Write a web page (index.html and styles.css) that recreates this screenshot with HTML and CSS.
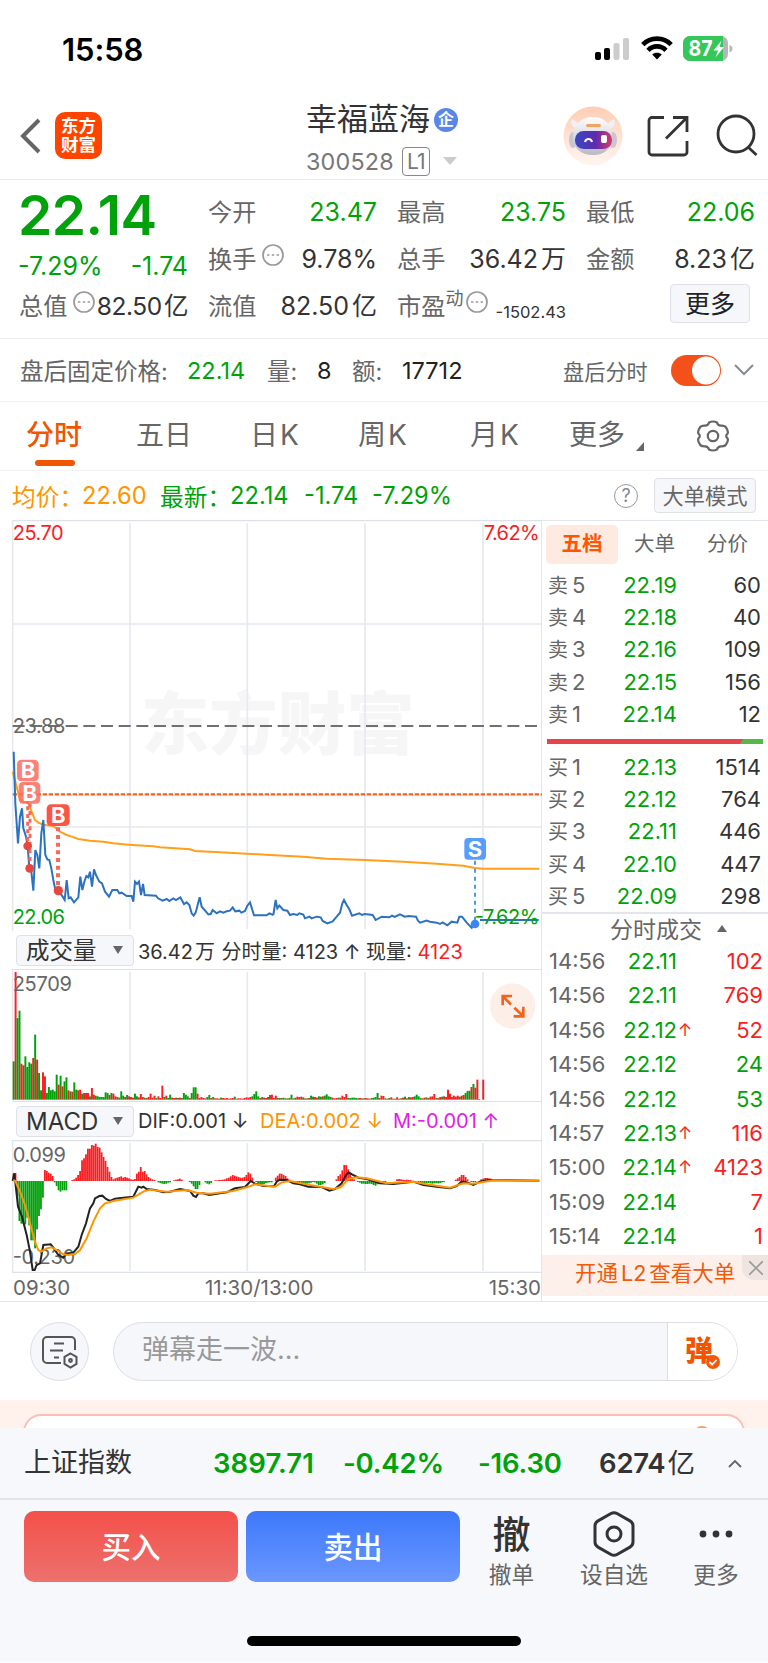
FILE: index.html
```html
<!DOCTYPE html>
<html lang="zh-CN">
<head>
  <meta charset="UTF-8">
  <meta name="viewport" content="width=device-width, initial-scale=1.0">
  <title>幸福蓝海 300528</title>
  <link rel="stylesheet" href="styles.css">
</head>
<body>

<div class="statusbar">
  <span class="time">15:58</span>
  <svg class="signal" width="35" height="24" viewBox="0 0 35 24">
    <rect x="0" y="14" width="6" height="8" rx="2"/>
    <rect x="9" y="10" width="6" height="12" rx="2"/>
    <rect x="18.500" y="5" width="6" height="17" rx="2" fill="#ccc"/>
    <rect x="28" y="0" width="6" height="22" rx="2" fill="#ccc"/>
  </svg>
  <svg class="wifi" width="32" height="24" viewBox="0 0 32 24">
    <g fill="none" stroke="#000" stroke-width="4.600">
      <path d="M1.800 8.600C9.500 .6 22.500 .6 30.200 8.600"/>
      <path d="M7 14.300c5-5.200 13-5.200 18 0"/>
    </g>
    <path d="M16 23.500l-4.800-5c2.600-2.300 7-2.300 9.600 0z"/>
  </svg>
  <svg class="battery" width="50" height="26" viewBox="0 0 50 26">
    <rect width="45" height="25" rx="7" fill="#b4b6ba"/>
    <path d="M7 0h33v25H7a7 7 0 0 1-7-7V7a7 7 0 0 1 7-7z" fill="#34c759"/>
    <path d="M46.500 9c4 1.500 4 6 0 7.500z" fill="#b4b6ba"/>
    <text x="5.500" y="20" class="battery-num" textLength="24" lengthAdjust="spacingAndGlyphs">87</text>
    <path d="M38.500 4.500l-8 10h4.500l-2.500 7 8.500-10.500h-4.500z" fill="#fff"/>
  </svg>
</div>

<header class="header">
  <svg class="back" width="22" height="36" viewBox="0 0 22 36"><path d="M19 2L3 18l16 16" fill="none" stroke="#666" stroke-width="4"/></svg>
  <div class="logo"><span>东方</span><span>财富</span></div>
  <div class="title">
    <div class="name"><span>幸福蓝海</span><i>企</i></div>
    <div class="code">300528<b>L1</b><svg width="14" height="8"><path d="M0 0h14l-7 8z" fill="#ccc"/></svg></div>
  </div>
  <svg class="robot" width="60" height="60" viewBox="0 0 60 60">
    <defs>
      <linearGradient id="halo" x2="0" y2="1"><stop stop-color="#ffcdb4"/><stop offset="1" stop-color="#fff6f1"/></linearGradient>
      <linearGradient id="visor"><stop stop-color="#3a48c4"/><stop offset=".55" stop-color="#5b2bb0"/><stop offset="1" stop-color="#d93a6a"/></linearGradient>
      <linearGradient id="shell" x2="0" y2="1"><stop stop-color="#fff"/><stop offset="1" stop-color="#b9b8c4"/></linearGradient>
    </defs>
    <circle cx="30" cy="30" r="29.500" fill="url(#halo)"/>
    <path d="M12 22c-4-2-5-5-3-9 3 1 6 4 8 7zM48 22c4-2 5-5 3-9-3 1-6 4-8 7z" fill="#f1eff3"/>
    <ellipse cx="10" cy="34" rx="4" ry="8" fill="#c9c6d4"/><ellipse cx="50" cy="34" rx="4" ry="8" fill="#c9c6d4"/>
    <path d="M30 11c11 0 19 7 19 20 0 12-8 18-19 18s-20-6-20-18c0-13 9-20 20-20z" fill="url(#shell)"/>
    <rect x="12" y="25" width="37" height="18" rx="8.500" fill="url(#visor)"/>
    <path d="M22 36c1-4 6-4 7 0" fill="none" stroke="#fff" stroke-width="2"/>
    <rect x="38" y="29" width="6" height="8" rx="2" fill="#fff"/>
    <rect x="23" y="18" width="15" height="3" rx="1.500" fill="#f4a261"/>
  </svg>
  <svg class="share" width="42" height="42" viewBox="0 0 42 42" fill="none" stroke="#333" stroke-width="2.800">
    <path d="M17 2.500H5a3 3 0 0 0-3 3V37a3 3 0 0 0 3 3h32a3 3 0 0 0 3-3V26M26 2.500h14V17M39.500 3L19 23.500"/>
  </svg>
  <svg class="search" width="44" height="44" viewBox="0 0 44 44" fill="none" stroke="#333" stroke-width="2.800">
    <circle cx="20" cy="20" r="18"/><path d="M32 33l8.500 8"/>
  </svg>
</header>

<section class="quote">
  <div class="price">22.14</div>
  <div class="change"><span>-7.29%</span><span>-1.74</span></div>
  <div class="cell cap"><label>总值</label><svg class="dots" viewBox="0 0 22 22"><circle cx="11" cy="11" r="10"/><path d="M5 11h2.400m2.400 0h2.400m2.400 0h2.400"/></svg><em>82.50<u>亿</u></em></div>
  <div class="cell c2 r1"><label>今开</label><em class="green">23.47</em></div>
  <div class="cell c3 r1"><label>最高</label><em class="green">23.75</em></div>
  <div class="cell c4 r1"><label>最低</label><em class="green">22.06</em></div>
  <div class="cell c2 r2"><label>换手</label><svg class="dots gap" viewBox="0 0 22 22"><circle cx="11" cy="11" r="10"/><path d="M5 11h2.400m2.400 0h2.400m2.400 0h2.400"/></svg><em>9.78%</em></div>
  <div class="cell c3 r2"><label>总手</label><em>36.42<u>万</u></em></div>
  <div class="cell c4 r2"><label>金额</label><em>8.23<u>亿</u></em></div>
  <div class="cell c2 r3"><label>流值</label><em>82.50<u>亿</u></em></div>
  <div class="cell c3 r3"><label>市盈</label><sup>动</sup><svg class="dots" viewBox="0 0 22 22"><circle cx="11" cy="11" r="10"/><path d="M5 11h2.400m2.400 0h2.400m2.400 0h2.400"/></svg><em class="small">-1502.43</em></div>
  <button class="more">更多</button>
</section>

<section class="after">
  <span class="w1">盘后固定价格:</span><b class="w2 green">22.14</b><span class="w3">量:</span><b class="w4">8</b><span class="w5">额:</span><b class="w6">17712</b>
  <span class="w7">盘后分时</span>
  <div class="toggle"></div>
  <svg width="20" height="12" viewBox="0 0 20 12"><path d="M1 1l9 9 9-9" fill="none" stroke="#888c94" stroke-width="2"/></svg>
</section>

<nav class="tabs">
  <span class="on">分时</span><span>五日</span><span>日<u>K</u></span><span>周<u>K</u></span><span>月<u>K</u></span><span>更多</span>
  <svg class="corner" width="8" height="9"><path d="M8 0v9H0z" fill="#666"/></svg>
  <svg class="gear" width="34" height="32" viewBox="0 0 34 32" fill="none" stroke="#666" stroke-width="2.200">
    <path d="M13 2.500q4-2 8 0q.8 3 3.800 3.200q4.400-.2 5.200 1.800q2.600 3.400 1.600 6q-2.800 2.500 0 5q1 2.600-1.600 6q-.8 2-5.200 1.800q-3 .2-3.800 3.200q-4 2-8 0q-.8-3-3.800-3.200q-4.400.2-5.200-1.800q-2.600-3.400-1.600-6q2.800-2.500 0-5q-1-2.600 1.600-6q.8-2 5.200-1.800q3-.2 3.800-3.200z"/>
    <circle cx="17" cy="16" r="5.200"/>
  </svg>
</nav>

<section class="avg">
  <span class="orange a1">均价：</span><span class="orange a2">22.60</span>
  <span class="green a3">最新：</span><span class="green a4">22.14</span><span class="green a5">-1.74</span><span class="green a6">-7.29%</span>
  <i class="help">?</i>
  <button class="mode">大单模式</button>
</section>

<main class="market">
  <div class="charts">
    <svg class="pane" width="542" height="411" viewBox="0 -660 1626 1233">
      <text class="watermark" x="422" y="28" textLength="822" lengthAdjust="spacingAndGlyphs">东方财富</text>
      <g class="grid">
        <path d="M38-660V573M390-650V567M742-650V567M1095-650V567M1449-650V567M38-348H1624M38 261H1624"/>
      </g>
      <path class="frame" d="M38-658H1626"/>
      <path d="M38-42H1620" stroke="#707070" stroke-width="6" stroke-dasharray="36 17"/>
      <path d="M38 163H1626" stroke="#f2641e" stroke-width="7" stroke-dasharray="13 5"/>
      <g class="avgline">
        <polyline points="38,95 50,140 60,180 85,190 95,215 105,240 115,248 130,254 160,258 180,275 200,285 215,290 235,297 270,302 310,305 340,310 385,314 460,319 480,322 570,328 585,333 660,337 740,341 810,345 910,350 980,356 1094,360 1210,365 1310,371 1390,377 1425,384 1450,386 1618,386"/>
      </g>
      <g class="priceline">
        <polyline points="41,35 46,190 54,310 60,230 66,205 70,265 78,290 83,318 88,385 94,395 100,452 106,330 112,345 118,385 124,280 130,240 136,345 142,358 148,360 154,385 160,420 166,450 175,452 188,470 194,480 200,420 206,475 212,472 222,487 235,472 241,410 247,450 253,425 259,408 265,412 270,395 276,440 282,388 288,405 298,425 306,430 315,455 327,470 337,450 352,450 358,460 365,458 380,468 395,468 400,485 405,425 411,432 417,425 423,465 429,432 434,465 468,467 474,475 488,482 500,477 508,483 520,475 528,480 541,472 547,483 552,492 560,487 568,495 575,520 581,527 587,518 599,472 605,500 618,515 625,523 632,522 638,510 650,520 660,514 670,518 680,514 690,512 698,502 706,514 718,512 724,518 735,513 742,497 750,487 762,526 800,526 808,520 820,525"/>
        <polyline transform="translate(810 0)" points="10,525 17,480 22,505 28,497 40,510 52,512 60,525 70,522 82,525 88,520 100,524 105,535 118,530 125,535 140,530 152,532 158,543 172,550 188,544 200,530 210,518 217,490 222,480 230,495 238,508 246,527 268,520 276,525 284,522 308,525 317,540 335,530 358,532 366,527 374,531 390,523 404,530 416,528 438,530 444,542 450,548 470,542 480,545 500,548 510,552 518,547 532,556 545,545 562,548 568,530 576,530 590,548 605,563 610,550 615,552"/>
        <path d="M1440 540H1616"/>
      </g>
      <g class="buys">
        <path d="M83 130V318M90 190V385"/>
        <path d="M174 262V450" class="thick"/>
        <circle cx="83" cy="318" r="13"/><circle cx="89" cy="385" r="13"/><circle cx="175" cy="452" r="14"/>
        <rect x="51" y="59" width="65" height="65" rx="13"/><rect x="56" y="126" width="65" height="65" rx="13"/><rect x="140" y="193" width="69" height="65" rx="13" class="strong"/>
        <text x="84" y="114">B</text><text x="89" y="182">B</text><text x="175" y="249">B</text>
      </g>
      <g class="sell">
        <path d="M1425 362V545" stroke-dasharray="12 12"/>
        <circle cx="1425" cy="552" r="13"/>
        <rect x="1393" y="294" width="65" height="65" rx="12"/>
        <text x="1425" y="350">S</text>
      </g>
      <text x="38" y="-600" class="red" textLength="153">25.70</text>
      <text x="1619" y="-600" class="red end" textLength="168">7.62%</text>
      <text x="38" y="-22" class="gray" textLength="158">23.88</text>
      <text x="38" y="551" class="green" textLength="157">22.06</text>
      <text x="1618" y="551" class="green end" textLength="194">-7.62%</text>
    </svg>

    <div class="bar">
      <div class="select cn"><span>成交量</span><svg width="10" height="8"><path d="M0 0h10l-5 8z" fill="#666"/></svg></div>
      <span class="vol">36.42<u>万</u> 分时量: 4123 ↑ 现量: <em class="red">4123</em></span>
    </div>

    <svg class="pane" width="542" height="133" viewBox="0 132 1626 399">
      <path class="frame" d="M38 133H1626M38 530H1626"/>
      <g class="grid"><path d="M38 132V531M390 141V523M742 141V523M1095 141V523M1449 141V523"/></g>
      <g id="volume"></g>
      <text x="38" y="198" class="gray" textLength="178">25709</text>
      <circle cx="1538" cy="243" r="68" fill="#fdefe8"/>
      <path d="M1508 241v-28h28M1508 213l25 26M1570 245v29h-29M1570 274l-27-26" class="expand"/>
    </svg>

    <div class="bar">
      <div class="select"><span>MACD</span><svg width="10" height="8"><path d="M0 0h10l-5 8z" fill="#666"/></svg></div>
      <span class="m1">DIF:0.001 ↓</span><span class="m2">DEA:0.002 ↓</span><span class="m3">M:-0.001 ↑</span>
    </div>

    <svg class="pane" width="542" height="133" viewBox="0 645 1626 399">
      <path class="frame" d="M38 647H1626M38 1042H1626"/>
      <g class="grid"><path d="M38 645V1044M390 654V1038M742 654V1038M1095 654V1038M1449 654V1038"/></g>
      <g id="macd"></g>
      <text x="38" y="711" class="gray" textLength="160">0.099</text>
      <text x="38" y="1018" class="gray" textLength="187">-0.230</text>
      <polyline class="dif" points="38,768 43,745 48,790 54,845 66,875 80,930 90,980 98,1035 104,1035 110,1020 120,1015 130,960 152,958 160,968 175,990 190,998 200,985 220,983 235,965 245,930 258,895 270,850 280,835 285,820 298,813 307,812 318,822 330,828 345,821 370,818 400,815 410,795 415,785 425,788 430,785 440,792 465,795 490,802 510,800 540,792 570,798 580,812 588,816 595,805 610,805 628,810 660,805 680,802 705,790 735,786 752,768 765,776 790,783 822,784 830,770 840,764 860,765 880,775 900,778 925,785 965,786 988,797 1005,792 1025,775 1038,750 1046,742 1056,748 1075,758 1100,762 1140,775 1180,777 1240,770 1270,780 1310,785 1350,790 1370,783 1385,770 1400,772 1420,780 1440,770 1470,765 1618,767"/>
      <polyline class="dea" points="40,765 46,768 60,800 75,840 90,895 105,950 115,975 124,980 140,970 155,967 170,975 190,988 205,990 225,987 240,975 260,940 280,890 300,850 315,835 340,828 400,818 430,800 450,794 500,800 560,795 590,803 630,806 700,798 740,787 765,778 800,782 825,785 845,772 870,768 930,780 1000,792 1022,787 1045,762 1070,757 1100,760 1160,775 1240,770 1280,778 1350,788 1390,775 1420,776 1480,766 1618,767"/>
    </svg>

    <div class="axis"><span>09:30</span><span>11:30/13:00</span><span>15:30</span></div>
  </div>

  <aside class="book">
    <div class="book-tabs"><b>五档</b><span>大单</span><span>分价</span></div>
    <div class="levels">
      <p><i>卖<u>5</u></i><em>22.19</em><b>60</b></p>
      <p><i>卖<u>4</u></i><em>22.18</em><b>40</b></p>
      <p><i>卖<u>3</u></i><em>22.16</em><b>109</b></p>
      <p><i>卖<u>2</u></i><em>22.15</em><b>156</b></p>
      <p><i>卖<u>1</u></i><em>22.14</em><b>12</b></p>
    </div>
    <div class="ratio"></div>
    <div class="levels">
      <p><i>买<u>1</u></i><em>22.13</em><b>1514</b></p>
      <p><i>买<u>2</u></i><em>22.12</em><b>764</b></p>
      <p><i>买<u>3</u></i><em>22.11</em><b>446</b></p>
      <p><i>买<u>4</u></i><em>22.10</em><b>447</b></p>
      <p><i>买<u>5</u></i><em>22.09</em><b>298</b></p>
    </div>
    <div class="deal-title"><span>分时成交</span><svg width="10" height="7"><path d="M0 7h10L5 0z" fill="#666"/></svg></div>
    <div class="deals">
      <p><i>14:56</i><em>22.11</em><s></s><b class="red">102</b></p>
      <p><i>14:56</i><em>22.11</em><s></s><b class="red">769</b></p>
      <p><i>14:56</i><em>22.12</em><s>↑</s><b class="red">52</b></p>
      <p><i>14:56</i><em>22.12</em><s></s><b class="green">24</b></p>
      <p><i>14:56</i><em>22.12</em><s></s><b class="green">53</b></p>
      <p><i>14:57</i><em>22.13</em><s>↑</s><b class="red">116</b></p>
      <p><i>15:00</i><em>22.14</em><s>↑</s><b class="red">4123</b></p>
      <p><i>15:09</i><em>22.14</em><s></s><b class="red">7</b></p>
      <p><i>15:14</i><em>22.14</em><s></s><b class="red">1</b></p>
    </div>
    <div class="promo"><span>开通<u>L2</u>查看大单</span><div class="close"><svg width="14" height="14"><path d="M0 0l14 14M14 0L0 14" stroke="#999" stroke-width="1.600"/></svg></div></div>
  </aside>
</main>

<section class="danmu">
  <div class="note">
    <svg width="38" height="34" viewBox="0 0 38 34" fill="none" stroke="#555" stroke-width="2">
      <path d="M34 15V6a4 4 0 0 0-4-4H6a4 4 0 0 0-4 4v18a4 4 0 0 0 4 4h14M13 8.500h10M9 15.500h13M13 22.500h5"/>
      <path d="M29.500 18.500l6 3.400v7l-6 3.600-6-3.600v-7z"/><circle cx="29.500" cy="25.500" r="1.400"/>
    </svg>
  </div>
  <div class="input"><span>弹幕走一波...</span>
    <div class="send">弹<svg width="14" height="14" viewBox="0 0 14 14"><circle cx="7" cy="7" r="7" fill="#f05a0a"/><path d="M3.500 7l2.600 2.600L10.500 5" fill="none" stroke="#fff" stroke-width="1.800"/></svg></div>
  </div>
</section>

<section class="feed"><div class="card"><i></i></div></section>

<section class="index">
  <span class="i1">上证指数</span><b class="i2">3897.71</b><b class="i3">-0.42%</b><b class="i4">-16.30</b><strong>6274<span>亿</span></strong>
  <svg width="14" height="9" viewBox="0 0 14 9"><path d="M1 8l6-6 6 6" fill="none" stroke="#666" stroke-width="1.800"/></svg>
</section>

<footer class="footer">
  <button class="buy">买入</button>
  <button class="sellbtn">卖出</button>
  <div class="act a-cancel"><div class="pic glyph">撤</div>撤单</div>
  <div class="act a-add"><div class="pic"><svg width="42" height="46" viewBox="0 0 42 46" fill="none" stroke="#333" stroke-width="3"><path d="M18 2.500q3-1.700 6 0l13 7.400q3 1.700 3 5v16.200q0 3.300-3 5l-13 7.400q-3 1.700-6 0l-13-7.400q-3-1.700-3-5V14.900q0-3.300 3-5z"/><circle cx="21" cy="23" r="7"/></svg></div>设自选</div>
  <div class="act a-more"><div class="pic"><svg width="34" height="8" fill="#333"><circle cx="4" cy="4" r="3.400"/><circle cx="17" cy="4" r="3.400"/><circle cx="30" cy="4" r="3.400"/></svg></div>更多</div>
  <div class="home"></div>
</footer>

<script src="script.js"></script>
</body>
</html>
```
FILE: styles.css
```css
body {
  margin: 0;
  width: 768px;
  height: 1663px;
  overflow: hidden;
  background: #fff;
  color: #333;
  font-family: Inter, "Noto Sans CJK SC", sans-serif;
}

* {
  box-sizing: border-box;
}

i, em, s, u {
  font-style: normal;
  text-decoration: none;
}

svg {
  display: block;
  flex: none;
}

button {
  font-family: inherit;
  padding: 0;
}

.green { color: #00a20a; fill: #00a20a; }
.red { color: #f81e22; fill: #f81e22; }
.orange { color: #ff9500; }
.gray { fill: #666; }

/* status bar */
.statusbar {
  display: flex;
  align-items: flex-start;
  height: 92px;
  padding: 36px 0 0 62px;
}

.time {
  width: 533px;
  color: #000;
  font-size: 31px;
  font-weight: 600;
  line-height: 27px;
  letter-spacing: -0.1px;
}

.signal { margin-top: 2px; }
.wifi { margin: 0 10px 0 11px; }
.battery-num { font: 700 22px Inter, sans-serif; fill: #fff; }

/* header */
.header {
  display: flex;
  height: 88px;
  border-bottom: 1px solid #e9eaec;
  padding-left: 20px;
}

.back { margin-top: 26px; }

.logo {
  display: flex;
  flex-direction: column;
  justify-content: center;
  width: 47px;
  height: 47px;
  margin: 20px 0 0 13px;
  padding-bottom: 2px;
  border-radius: 10px;
  background: #ff4400;
  color: #fff;
  font-size: 17.5px;
  font-weight: 700;
  line-height: 19px;
  text-align: center;
}

.title {
  width: 257px;
  margin-left: 204px;
}

.name {
  display: flex;
  align-items: center;
  height: 56px;
  font-size: 31px;
}

.name span { margin-top: -7px; }

.name i {
  width: 24px;
  height: 24px;
  margin-left: 4px;
  border-radius: 50%;
  background: #5a86ea;
  color: #fff;
  font-size: 16px;
  font-weight: 700;
  line-height: 23px;
  text-align: center;
}

.code {
  display: flex;
  align-items: center;
  height: 26px;
  color: #777;
  font-size: 23.3px;
  letter-spacing: 0.2px;
}

.code b {
  width: 28px;
  height: 29px;
  margin: 0 13px 0 8px;
  border: 1.5px solid #888;
  border-radius: 4px;
  font-size: 21px;
  font-weight: 400;
  line-height: 27px;
  letter-spacing: -1px;
  text-align: center;
}

.robot { margin: 14px 24px 0 0; }
.share { margin: 23px 27px 0 0; }
.search { margin-top: 22px; }

/* quote */
.quote {
  display: grid;
  grid-template-columns: 169px 169px 169px 169px;
  grid-template-rows: 47px 47px 47px;
  column-gap: 20px;
  height: 159px;
  padding: 9px 0 0 19px;
  border-bottom: 1px solid #e9eaec;
}

.price {
  grid-area: 1 / 1;
  margin-left: -1px;
  color: #00a20a;
  font-size: 55px;
  font-weight: 600;
  line-height: 53px;
  letter-spacing: -0.5px;
}

.change {
  grid-area: 2 / 1;
  display: flex;
  justify-content: space-between;
  margin-left: -1px;
  color: #00a20a;
  font-size: 25px;
  line-height: 61px;
}

.cell {
  display: flex;
  line-height: 47px;
}

.cap { grid-area: 3 / 1; }
.c2 { grid-column: 2; }
.c3 { grid-column: 3; }
.c4 { grid-column: 4; }
.r1 { grid-row: 1; }
.r2 { grid-row: 2; }
.r3 { grid-row: 3; }

.cell label {
  color: #666;
  font-size: 24.2px;
}

.cell em {
  flex: 1;
  font-size: 25px;
  text-align: right;
  white-space: nowrap;
}

.cell em u { margin-left: 3px; }

.cell em.small {
  font-size: 16.5px;
  line-height: 59px;
}

.cell sup {
  color: #666;
  font-size: 18px;
  line-height: 32px;
  vertical-align: top;
}

.dots {
  width: 22px;
  height: 22px;
  margin: 8px 0 0 6px;
  fill: none;
  stroke: #999;
  stroke-width: 1.7;
}

.cap .dots { margin-left: 6px; }
.r3 .dots { margin-left: 3px; }
.cap em { margin-left: -4px; font-size: 24.5px; letter-spacing: -0.4px; }
.cap em u { margin-left: 2px; }

.more {
  grid-area: 3 / 4;
  justify-self: end;
  width: 80px;
  height: 39px;
  margin: 1px 5px 0 0;
  border: 1px solid #dfe1e7;
  border-radius: 4px;
  background: #f6f7fb;
  color: #222;
  font-size: 25px;
  line-height: 34px;
}

/* after-hours */
.after {
  display: flex;
  align-items: center;
  height: 63px;
  padding-left: 20px;
  border-bottom: 1px solid #eff0f2;
  color: #666;
  font-size: 23.5px;
}

.after span, .after b { white-space: nowrap; }
.after b { font-weight: 400; color: #222; }
.after b.green { color: #00a20a; }
.w1 { width: 167px; }
.w2 { width: 80px; }
.w3 { width: 50px; }
.w4 { width: 35px; }
.w5 { width: 50px; }
.w6 { width: 161px; }
.w7 { width: 108px; font-size: 21.2px; }

.toggle {
  width: 50px;
  height: 31px;
  margin-right: 13px;
  border-radius: 16px;
  background: radial-gradient(circle at 35px 15.5px, #fff 13.5px, #f4501a 14.5px);
}

/* tabs */
.tabs {
  display: flex;
  height: 69px;
  padding-left: 26px;
  border-bottom: 1px solid #eff0f2;
  color: #666;
  font-size: 28px;
  line-height: 67px;
}

.tabs span {
  width: 110px;
  margin-right: 5px;
  white-space: nowrap;
}

.tabs span:nth-child(3) { width: 103px; }
.tabs span:nth-child(4) { width: 107px; }
.tabs span:nth-child(5) { width: 94px; }
.tabs span:nth-child(6) { width: 60px; }
.tabs span:nth-child(2) { width: 109px; }
.tabs u { margin-left: 2px; font-size: 28px; }

.tabs .on {
  width: 105px;
  color: #f05500;
  font-weight: 500;
}

.on::after {
  content: "";
  display: block;
  width: 40px;
  height: 6px;
  margin: -9px 0 0 9px;
  border-radius: 3px;
  background: #f05500;
}

.corner { margin: 40px 0 0 2px; }
.gear { margin: 18px 0 0 52px; }

/* average price line */
.avg {
  display: flex;
  align-items: center;
  height: 49px;
  padding-left: 12px;
  font-size: 23.7px;
  white-space: nowrap;
}

.a1 { width: 70px; }
.a2 { width: 78px; }
.a3 { width: 70px; }
.a4 { width: 74px; }
.a5 { width: 68px; }
.a6 { width: 242px; }

.help {
  width: 24px;
  height: 24px;
  border: 1.5px solid #999;
  border-radius: 50%;
  color: #888;
  font-size: 18px;
  line-height: 21px;
  text-align: center;
}

.mode {
  width: 102px;
  height: 35px;
  margin-left: 16px;
  border: 1px solid #dfe1e7;
  border-radius: 4px;
  background: #f6f7fb;
  color: #666;
  font-size: 21.2px;
  line-height: 30px;
}

/* charts */
.market {
  display: flex;
  height: 782px;
  border-bottom: 1px solid #e3e5ea;
}

.charts {
  width: 542px;
  border-right: 1px solid #e3e5ec;
}

.pane text {
  font-size: 60px;
}

.pane .end { text-anchor: end; }

.pane .watermark {
  fill: #f6f6f7;
  font-size: 204px;
  font-weight: 900;
}

.grid { fill: none; stroke: #e6e9f1; stroke-width: 5; }
.frame { fill: none; stroke: #dfe1e9; stroke-width: 4; }
.avgline { fill: none; stroke: #ff9f1c; stroke-width: 6; }
.priceline { fill: none; stroke: #2d72c0; stroke-width: 6; }

.buys path {
  stroke: #f9685f;
  stroke-width: 9;
  stroke-dasharray: 12 11;
}

.buys path.thick { stroke-width: 12; }
.buys circle { fill: #e5483f; }
.buys rect { fill: #fb6b5f; opacity: 0.85; }
.buys rect.strong { fill: #fb5545; opacity: 1; }

.pane .buys text,
.pane .sell text {
  fill: #fff;
  font-size: 66px;
  font-weight: 700;
  text-anchor: middle;
}

.sell path { stroke: #4c95fa; stroke-width: 6; }
.sell circle { fill: #3b86f4; }
.sell rect { fill: #579dfb; }
.expand { fill: none; stroke: #f2641e; stroke-width: 8; }
.up { fill: #f81e22; }
.down { fill: #00a20a; }
.dif { fill: none; stroke: #222; stroke-width: 6; }
.dea { fill: none; stroke: #ff9500; stroke-width: 6; }

.bar {
  display: flex;
  align-items: center;
  height: 38px;
  padding-left: 16px;
  font-size: 20px;
  white-space: nowrap;
}

.vol u { margin: 0 1px 0 2px; }

.select {
  display: flex;
  align-items: center;
  justify-content: space-between;
  width: 118px;
  height: 31px;
  margin-right: 4px;
  padding: 0 10px 0 9px;
  border: 1px solid #dfe1e7;
  border-radius: 4px;
  background: #f6f7fb;
  font-size: 24px;
}

.select.cn { font-size: 23.5px; }
.select.cn span { margin-top: -3px; }

.m1 { width: 122px; }
.m2 { width: 133px; color: #ff9500; }
.m3 { color: #e01ee6; }

.axis {
  display: flex;
  padding-left: 13px;
  color: #666;
  font-size: 20.5px;
  line-height: 30px;
}

.axis span:nth-child(1) { width: 192px; }
.axis span:nth-child(2) { flex: 1; }

/* order book */
.book {
  width: 226px;
  border-top: 1px solid #e3e5ec;
}

.book-tabs {
  display: flex;
  height: 47px;
  padding: 4px 0 0 4px;
  color: #666;
  font-size: 20.5px;
  line-height: 38px;
  text-align: center;
}

.book-tabs b {
  width: 72px;
  height: 39px;
  border-radius: 5px;
  background: #feeae1;
  color: #ff5500;
}

.book-tabs span { width: 73px; }

.book p {
  display: flex;
  margin: 0;
  font-size: 22px;
}

.book p i { width: 63px; color: #666; white-space: nowrap; }
.book p em { width: 66px; color: #00a20a; text-align: right; }
.book p b { flex: 1; font-weight: 400; text-align: right; }

.levels {
  height: 162px;
  padding: 1px 7px 0 6px;
}

.levels p { height: 32.2px; line-height: 32px; }
.levels i { font-size: 20px; }
.levels u { margin-left: 4px; font-size: 22px; }

.ratio {
  height: 5px;
  margin: 9px 5px 6px;
  background: linear-gradient(120deg, #e8424a 89.5%, #55b848 89.5%);
}

.deal-title {
  display: flex;
  align-items: center;
  justify-content: center;
  height: 33px;
  padding-left: 27px;
  border-top: 2px solid #e3e5ec;
  color: #666;
  font-size: 23px;
}

.deal-title span { margin-top: -4px; }
.deal-title svg { margin: -2px 0 0 15px; }

.deals {
  padding: 0 5px 0 7px;
  height: 310px;
}

.deals p { height: 34.4px; line-height: 32px; }
.book .deals i { width: 62px; }
.deals s { width: 15px; color: #f81e22; font-size: 17px; padding-left: 1px; }

.promo {
  display: flex;
  justify-content: space-between;
  height: 41px;
  background: #fdf0ea;
  color: #f05a0a;
  font-size: 21.5px;
  line-height: 37px;
  padding-left: 33px;
}

.promo u { margin: 0 3px; }

.close {
  display: flex;
  align-items: center;
  justify-content: center;
  width: 26px;
  height: 25px;
  border-bottom-left-radius: 12px;
  background: #efe4df;
  padding-left: 2px;
}

/* danmu input */
.danmu {
  display: flex;
  height: 98px;
  padding: 20px 0 0 30px;
}

.note {
  display: flex;
  align-items: center;
  justify-content: center;
  width: 59px;
  height: 59px;
  margin-right: 24px;
  border: 1px solid #dcdee4;
  border-radius: 50%;
  background: #f6f7fa;
}

.input {
  display: flex;
  justify-content: space-between;
  width: 625px;
  height: 59px;
  padding-left: 28px;
  border: 1px solid #dcdee4;
  border-radius: 30px;
  background: #f6f7fa;
  color: #999;
  font-size: 27px;
  line-height: 53px;
  overflow: hidden;
}

.send {
  display: flex;
  align-items: flex-end;
  width: 70px;
  border-left: 1px solid #dcdee4;
  background: #fff;
  color: #f05500;
  font-size: 28px;
  font-weight: 900;
  line-height: 57px;
  padding-left: 17px;
}

.send svg { margin: 0 0 11px -7px; }

.feed {
  height: 28px;
  padding: 14px 23px 0;
  background: #fff2ec;
  overflow: hidden;
}

.card {
  height: 40px;
  padding: 10px 0 0 668px;
  border: 2px solid #fdbfb4;
  border-radius: 18px;
  background: #fff;
}

.card i {
  display: block;
  width: 18px;
  height: 18px;
  border-radius: 50%;
  background: #ff9b57;
}

/* index ticker */
.index {
  display: flex;
  align-items: center;
  height: 72px;
  padding-left: 24px;
  border-bottom: 2px solid #e2e4e8;
  background: #f7f8fb;
  font-size: 27.5px;
  line-height: 66px;
  white-space: nowrap;
}

.index b { color: #00a20a; font-weight: 600; letter-spacing: -0.2px; }
.index strong { width: 129px; font-weight: 600; letter-spacing: -0.2px; }
.index strong span { font-weight: 400; margin-left: 2px; }
.i1 { width: 189px; font-size: 27px; }
.index .i2 { width: 130px; letter-spacing: 0.1px; }
.i3 { width: 135px; }
.i4 { width: 121px; }

/* footer */
.footer {
  display: flex;
  flex-wrap: wrap;
  align-content: flex-start;
  height: 162px;
  padding: 11px 0 0 24px;
  background: #f7f8fb;
}

.footer button {
  width: 214px;
  height: 71px;
  margin-right: 8px;
  padding-bottom: 4px;
  border: 0;
  border-radius: 10px;
  color: #fff;
  font-size: 29.5px;
  font-weight: 500;
}

.footer .buy { background: linear-gradient(#f4504a, #ec716d); }
.footer .sellbtn { background: linear-gradient(#3d78fa, #6b97ff); margin-right: 0; }

.act {
  width: 102px;
  color: #666;
  font-size: 22.7px;
  line-height: 36px;
  text-align: center;
}

.a-cancel { width: 103px; }
.a-add { width: 102px; }

.pic {
  display: flex;
  align-items: center;
  justify-content: center;
  height: 46px;
}

.glyph {
  color: #333;
  font-size: 38px;
  font-weight: 500;
}

.home {
  width: 274px;
  height: 10px;
  margin: 43px 0 0 223px;
  border-radius: 5px;
  background: #000;
}
```
FILE: script.js
```javascript
const SVG_NS = 'http://www.w3.org/2000/svg';
const STEP = 5.87;

// one entry per minute, negative = falling (green)
const volume = [
  -115, 383, -245, -267, 108, 103, -130, -98, -112, -108, 125, -195, 120, -80, -28, 82, 70, -20, -38, -28,
  -30, -25, -75, 45, -72, 40, -55, -67, 28, -25, 24, -52, -30, 28, 30, -18, 20, 20, 20, -10,
  35, 15, -12, -10, -8, -8, -8, -22, -20, 14, -20, 18, 10, 8, -6, -25, -12, 8, -14, 10,
  8, 6, -18, -10, 7, 17, 8, -6, 5, 8, 18, 6, 12, -5, 10, 5, 42, -8, 12, -5,
  -15, 6, 5, -6, 5, 6, -5, -20, -15, -10, 5, -20, -37, -37, 18, 5, 8, 5, 4, -8,
  -14, 5, -8, 4, 4, 3, -6, 5, 4, 5, 3, 4, 5, -9, 3, 4, 4, 3, 5, 7,
  6, 8, -10, -17, -25, -10, 5, -8, 6, 5, -8, 14, 15, 5, 12, -5, -5, 5, -6, -4,
  4, -5, -15, 4, -6, 9, 8, 9, -7, 4, -4, 5, -12, -9, 8, 6, -10, -9, 10, -12,
  -16, -10, -8, 6, 4, 5, -6, 6, 12, 8, 17, -5, -5, -6, -6, -5, 4, 5, -4, 4,
  5, 4, 3, -5, -6, -8, -20, 5, 12, 11, -4, 3, -5, 7, 3, -3, 7, 3, -4, 6,
  -9, 4, -8, 7, 8, -10, -15, -10, -5, 4, 6, -7, 5, 9, 10, 17, -5, 5, 8, -9,
  10, 8, 30, 18, 8, 12, 9, 12, -9, 12, 14, -20, -26, -27, 38, -47, 36, 60, 2, 0, 60
];

// [first minute, bar heights...]
const macd = [
  [0, 22, 24],
  [2, -45, -120, -128, -128, -130, -110, -133, -178, -178, -202, -145, -105, -85, -50],
  [16, 33, 30, 25, 22, 15],
  [21, -4, -15, -28, -32, -28, -28, -28],
  [30, 3, 5, 10, 18, 30, 62, 68, 80, 97, 97, 108, 106, 112, 102, 100, 86, 72, 60, 42, 28, 12, 5, 8, 10, 12, 14, 10, 12, 10, 8, 5, 4, 6],
  [63, 22, 28, 42, 28, 30, 20, 12, 8, 5, 3],
  [74, -4, -6, -8, -9, -8, -5, -4],
  [82, 2, 4, 5, 7, 4],
  [90, -3, -8, -16, -24, -24, -12],
  [98, -4, -8, -10, -6],
  [103, 2, 2, 3, 3, 4, 5, 8, 10, 14, 18, 16, 14, 12, 10, 10, 12, 18, 26, 22, 10],
  [124, -3, -8, -9, -10, -9, -6, -5, -4, -4],
  [134, 10, 16, 22, 22, 18, 15, 8, 4],
  [142, -3, -4, -5, -6, -7, -8, -10, -9, -8, -7, -5, -3, -4, -8, -12, -12, -10, -6],
  [165, 5, 15, 20, 32, 48, 48, 35, 22, 12, 5],
  [176, -3, -5, -8, -8, -9, -9, -8, -9, -12, -14, -10, -6, -4, -4, -3],
  [196, 5, 6, 5, 4, 3, 4, 3, 3],
  [207, -5, -7, -8, -8, -7, -6, -7, -8, -7, -6, -7, -6, -4, -3],
  [226, 4, 8, 12, 18, 18, 12, 5],
  [234, -3, -4, -3],
  [239, 5, 7, 9, 9, 8, 7, 5, 4, 3]
];

function drawBar(parent, minute, top, height, width, cls) {
  const bar = document.createElementNS(SVG_NS, 'rect');
  bar.setAttribute('x', 38 + minute * STEP);
  bar.setAttribute('y', top);
  bar.setAttribute('width', width);
  bar.setAttribute('height', height);
  bar.setAttribute('class', cls);
  parent.appendChild(bar);
}

const volumeGroup = document.getElementById('volume');
volume.forEach((value, minute) => {
  const height = Math.abs(value);
  drawBar(volumeGroup, minute, 524 - height, height, STEP, value > 0 ? 'up' : 'down');
});

const macdGroup = document.getElementById('macd');
macd.forEach(([start, ...values]) => {
  values.forEach((value, i) => {
    const top = value > 0 ? 768 - value : 768;
    drawBar(macdGroup, start + i, top, Math.abs(value), 5.4, value > 0 ? 'up' : 'down');
  });
});
```
